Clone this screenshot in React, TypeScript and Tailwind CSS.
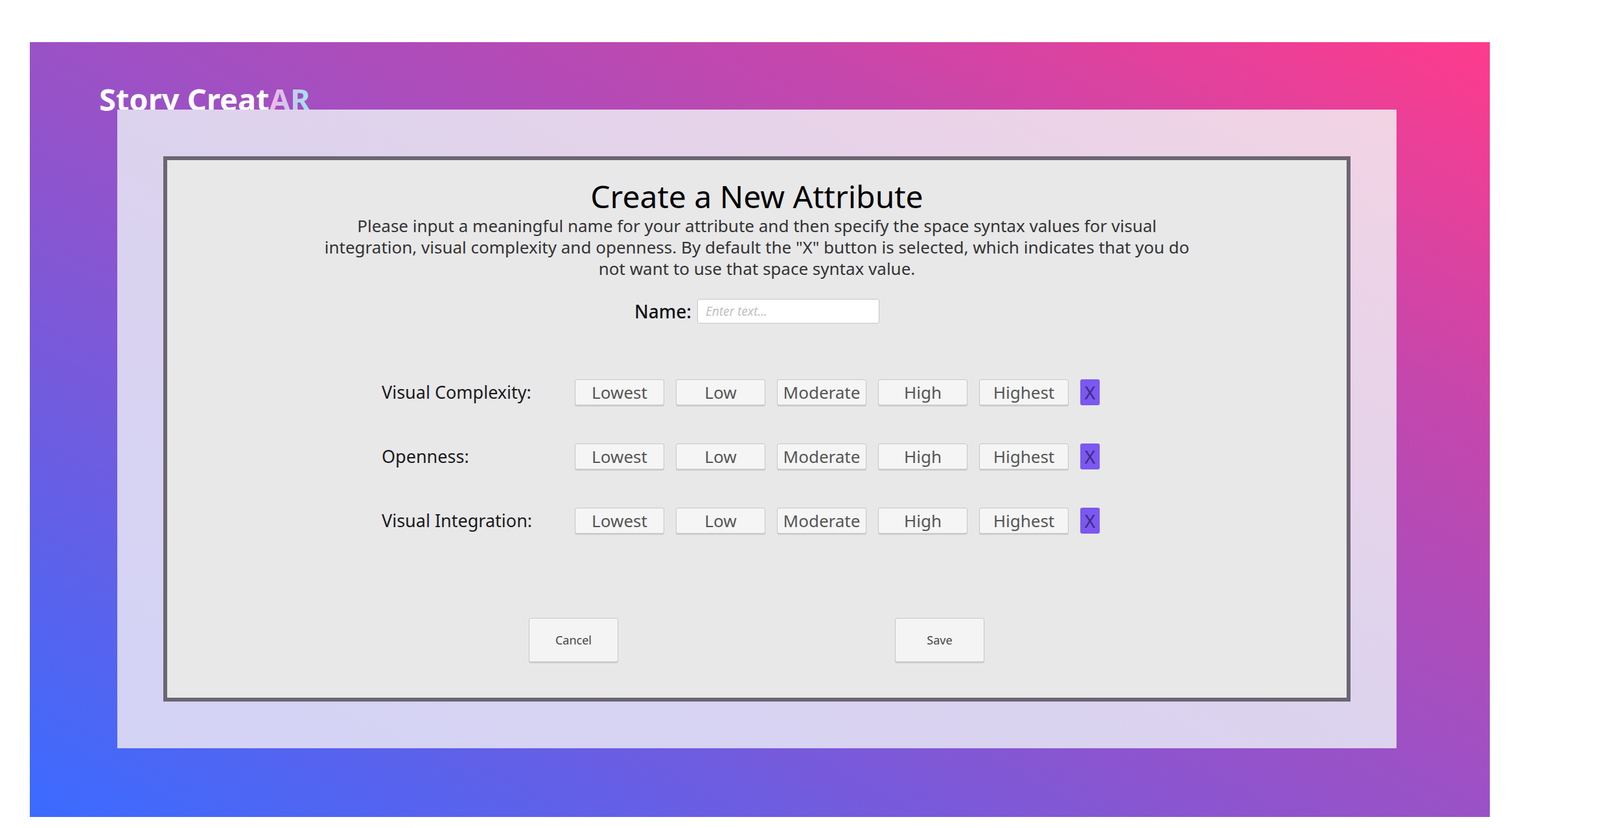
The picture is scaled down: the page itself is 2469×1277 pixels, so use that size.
const levels = ["Lowest", "Low", "Moderate", "High", "Highest"]
const rows = ["Visual Complexity:", "Openness:", "Visual Integration:"]

export default function App() {
  return (
    <div className="h-[1277px] w-[2469px] bg-white pl-[46px] pt-[65px] font-['Liberation_Sans',Arial,sans-serif]">
      <div className="flex h-[1195px] w-[2253px] flex-col bg-[linear-gradient(to_top_right,#3a6bff_0%,#8a55d0_40%,#c447ad_75%,#ff3b8c_100%)] pl-[135px]">
        <div className="-ml-[28px] mt-[72px] h-[32px] text-[47px] leading-[32px] font-bold text-white">
          Story Creat
          <span className="bg-[linear-gradient(to_right,#f4b3e8,#9fe3ee)] bg-clip-text text-transparent">AR</span>
        </div>
        <div className="mt-0 flex h-[985px] w-[1974px] flex-col bg-[linear-gradient(to_top_right,#d3d3f6,#dcd3ee_50%,#f2d3e4)] pl-[71px] pt-[72px]">
          <div className="flex h-[841px] w-[1832px] flex-col items-center border-[6px] border-[#6c6672] bg-[#e8e8e9] text-[#111]">
            <h1 className="mt-[28px] text-[48px] leading-[56px] font-normal text-black">Create a New Attribute</h1>
            <p className="mt-[1px] w-[1380px] text-center text-[26px] leading-[33px] text-[#333]">
              Please input a meaningful name for your attribute and then specify the space syntax values for visual integration, visual complexity and openness. By default the "X" button is selected, which indicates that you do not want to use that space syntax value.
            </p>
            <div className="mt-[28px] flex items-center gap-[9px]">
              <span className="text-[28px] font-medium">Name:</span>
              <div className="flex h-[38px] w-[281px] items-center rounded-[3px] border border-[#c4c4c4] bg-white px-[12px] text-[19px] italic text-[#c0c0c0]">
                Enter text...
              </div>
            </div>
            <div className="mt-[84px] flex flex-col gap-[59px] self-start pl-[331px]">
              {rows.map((r) => (
                <div key={r} className="flex h-[40px] items-center">
                  <span className="w-[298px] text-[27px] text-[#1a1a1a]">{r}</span>
                  <div className="flex gap-[18px]">
                    {levels.map((l) => (
                      <div
                        key={l}
                        className="flex h-[40px] w-[138px] items-center justify-center rounded-[3px] border border-[#c6c6c6] bg-[#f5f5f5] text-[26px] text-[#555] shadow-[0_2px_0_#cfcfcf]"
                      >
                        {l}
                      </div>
                    ))}
                    <div className="flex h-[40px] w-[30px] items-center justify-center rounded-[3px] bg-[#7b58f0] text-[28px] text-[#3a2a80]">
                      X
                    </div>
                  </div>
                </div>
              ))}
            </div>
            <div className="mt-[130px] flex gap-[427px] self-start pl-[558px]">
              {["Cancel", "Save"].map((b) => (
                <div
                  key={b}
                  className="flex h-[68px] w-[138px] items-center justify-center rounded-[3px] border border-[#c6c6c6] bg-[#f4f4f4] text-[18px] text-[#444] shadow-[0_2px_0_#cfcfcf]"
                >
                  {b}
                </div>
              ))}
            </div>
          </div>
        </div>
      </div>
    </div>
  )
}
